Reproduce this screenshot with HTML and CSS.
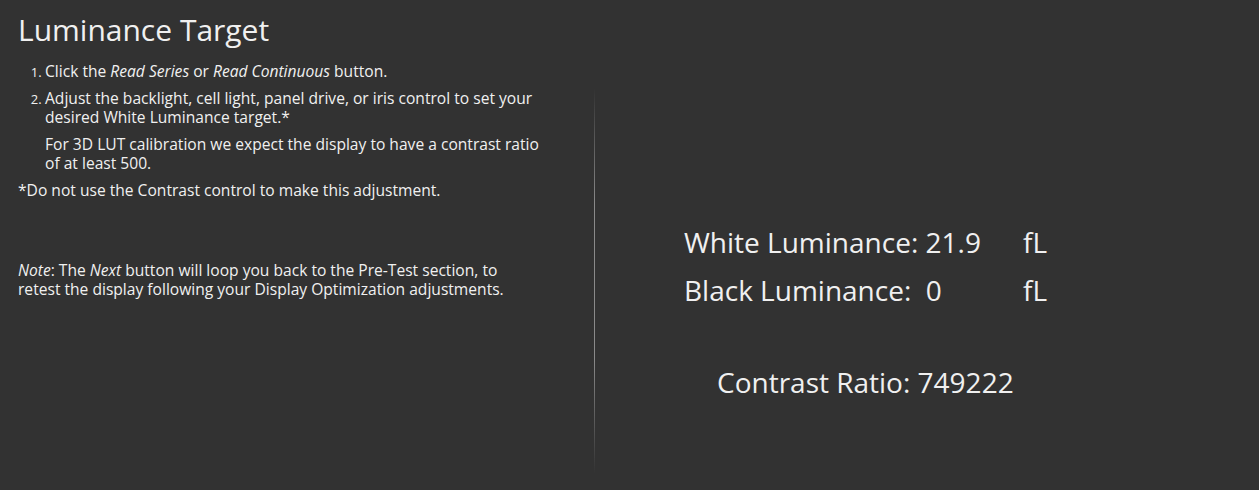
FILE: index.html
```html
<!DOCTYPE html>
<html>

<head>
  <title>Luminance Target</title>
  <link rel="stylesheet" href="styles.css">
</head>

<body>
  <div class="page">
    <!-- Instructions -->
    <div class="instructions">
      <h1>Luminance Target</h1>
      <ol class="steps">
        <li>Click the <em>Read Series</em> or <em>Read Continuous</em> button.</li>
        <li>
          <p>Adjust the backlight, cell light, panel drive, or iris control to set your<br>desired White Luminance target.*</p>
          <p>For 3D LUT calibration we expect the display to have a contrast ratio<br>of at least 500.</p>
        </li>
      </ol>
      <p class="footnote">*Do not use the Contrast control to make this adjustment.</p>
      <p class="note"><em>Note</em>: The <em>Next</em> button will loop you back to the Pre-Test section, to<br>retest the display following your Display Optimization adjustments.</p>
    </div>

    <div class="divider"></div>

    <!-- Readings -->
    <div class="readings">
      <div class="reading">
        <span class="reading-label">White Luminance: 21.9</span>
        <span class="reading-unit">fL</span>
      </div>
      <div class="reading">
        <span class="reading-label">Black Luminance:&nbsp; 0</span>
        <span class="reading-unit">fL</span>
      </div>
      <div class="contrast">Contrast Ratio: 749222</div>
    </div>
  </div>
</body>

</html>
```

FILE: styles.css
```css
html,
body {
  height: 100%;
}

body {
  margin: 0;
  background-color: #323232;
  color: #f0f0f0;
  font-family: "Open Sans", Lato, sans-serif;
}

.page {
  display: flex;
  height: 100%;
}

.instructions {
  width: 576px;
  padding-left: 18px;
  font-size: 15.6px;
  line-height: 19px;
}

h1 {
  margin: 12px 0 14px;
  font-size: 30px;
  font-weight: 400;
  line-height: 36px;
}

.steps {
  margin: 0;
  padding-left: 27px;
  white-space: nowrap;
}

.steps li {
  margin-bottom: 8px;
}

.steps li::marker {
  font-size: 13px;
}

.steps p {
  margin: 0 0 8px;
}

.steps p:last-child {
  margin-bottom: 0;
}

.footnote {
  margin: 0;
}

.note {
  margin: 61px 0 0;
  white-space: nowrap;
}

.divider {
  width: 1px;
  margin-top: 88px;
  height: 386px;
  background: linear-gradient(to bottom, rgba(140, 140, 140, 0), #8a8a8a 30%, #8a8a8a 70%, rgba(140, 140, 140, 0));
}

.readings {
  padding: 218px 0 0 89px;
  font-size: 28px;
  line-height: 48px;
}

.reading {
  display: flex;
}

.reading-label {
  width: 339px;
  white-space: pre;
}

.contrast {
  margin-top: 44px;
  padding-left: 33px;
}
```
